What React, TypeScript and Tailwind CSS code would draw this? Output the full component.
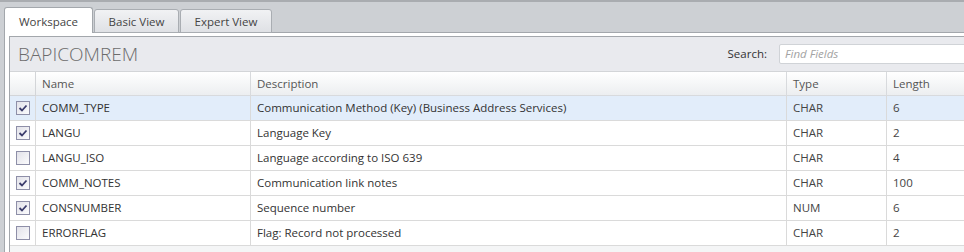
import { Fragment } from "react";

interface Field {
  name: string;
  description: string;
  type: string;
  length: string;
  checked: boolean;
}

const fields: Field[] = [
  { name: "COMM_TYPE", description: "Communication Method (Key) (Business Address Services)", type: "CHAR", length: "6", checked: true },
  { name: "LANGU", description: "Language Key", type: "CHAR", length: "2", checked: true },
  { name: "LANGU_ISO", description: "Language according to ISO 639", type: "CHAR", length: "4", checked: false },
  { name: "COMM_NOTES", description: "Communication link notes", type: "CHAR", length: "100", checked: true },
  { name: "CONSNUMBER", description: "Sequence number", type: "NUM", length: "6", checked: true },
  { name: "ERRORFLAG", description: "Flag: Record not processed", type: "CHAR", length: "2", checked: false },
];

function Checkbox({ checked }: { checked: boolean }) {
  return (
    <div className="flex h-[14px] w-[14px] items-center justify-center border border-[#8e8fa8] bg-linear-to-br from-[#e2e2e9] to-[#fbfbfd]">
      {checked && (
        <svg width="12" height="12" viewBox="0 0 12 12">
          <path d="M2.5 6 L5 8.5 L9.5 3.5" fill="none" stroke="#3a3b6b" strokeWidth="1.8" />
        </svg>
      )}
    </div>
  );
}

function Tab({ label, active }: { label: string; active?: boolean }) {
  if (active) {
    return (
      <div className="relative z-10 -mb-px flex h-[26px] w-[89px] items-center justify-center rounded-t-[3px] border border-b-0 border-[#a3a7ac] bg-white pt-[2px] text-[#444]">
        {label}
      </div>
    );
  }
  return (
    <div className="-mb-px flex h-[24px] items-center justify-center rounded-t-[3px] border border-[#a9adb2] bg-linear-to-b from-[#f1f2f4] to-[#dfe1e5] pt-[1px] text-[#444]">
      {label}
    </div>
  );
}

export default function App() {
  return (
    <div
      className="h-[252px] w-[964px] overflow-hidden border-t-2 border-[#a9acb0] bg-[#cdd0d4] text-[11.5px]"
      style={{ fontFamily: '"Open Sans", "Noto Sans", sans-serif' }}
    >
      {/* Tabs */}
      <div className="flex items-end gap-[1px] pl-[4px] pt-[5px]">
        <Tab label="Workspace" active />
        <div className="w-[85px]">
          <Tab label="Basic View" />
        </div>
        <div className="w-[92px]">
          <Tab label="Expert View" />
        </div>
      </div>

      <div className="ml-[4px] h-full w-[980px] border-l border-t border-[#a3a7ac] bg-white pl-[4px] pt-[3px]">
        <div className="h-full border-l border-t border-[#a3a7ac] bg-[#f4f5f6]">
          {/* Title + search */}
          <div className="flex h-[34px] items-center bg-[#e9eaee] pl-[8px]">
            <div className="pt-[1px] text-[19px] font-light text-[#6c6c6c]">BAPICOMREM</div>
            <div className="ml-auto flex items-center gap-[12px]">
              <span className="text-[#333]">Search:</span>
              <div className="flex h-[20px] w-[205px] items-center rounded-[2px] border border-[#d0d3d7] bg-white pl-[5px] italic text-[#a3a3a3]">
                Find Fields
              </div>
            </div>
          </div>

          {/* Table */}
          <div className="grid grid-cols-[26px_215px_536px_100px_1fr] border-t border-[#d3d5d8] leading-none text-[#333]">
            <div className="h-[24px] border-b border-r border-[#d3d5d8] bg-linear-to-b from-white to-[#eceef0]" />
            {["Name", "Description", "Type", "Length"].map((h) => (
              <div
                key={h}
                className="flex h-[24px] items-center border-b border-r border-[#d8dadd] bg-linear-to-b from-white to-[#eceef0] px-[6px] text-[#555]"
              >
                {h}
              </div>
            ))}
            {fields.map((f, i) => {
              const bg = i === 0 ? "bg-[#e2edfa]" : "bg-white";
              return (
                <Fragment key={f.name}>
                  <div className={`flex h-[25px] items-center justify-center border-b border-r border-[#dadada] ${bg}`}>
                    <Checkbox checked={f.checked} />
                  </div>
                  <div className={`flex h-[25px] items-center border-b border-r border-[#dadada] px-[6px] ${bg}`}>
                    {f.name}
                  </div>
                  <div className={`flex h-[25px] items-center border-b border-r border-[#dadada] px-[6px] ${bg}`}>
                    {f.description}
                  </div>
                  <div className={`flex h-[25px] items-center border-b border-r border-[#dadada] px-[6px] text-[#444] ${bg}`}>
                    {f.type}
                  </div>
                  <div className={`flex h-[25px] items-center border-b border-[#dadada] px-[6px] text-[#444] ${bg}`}>
                    {f.length}
                  </div>
                </Fragment>
              );
            })}
          </div>
        </div>
      </div>
    </div>
  );
}
